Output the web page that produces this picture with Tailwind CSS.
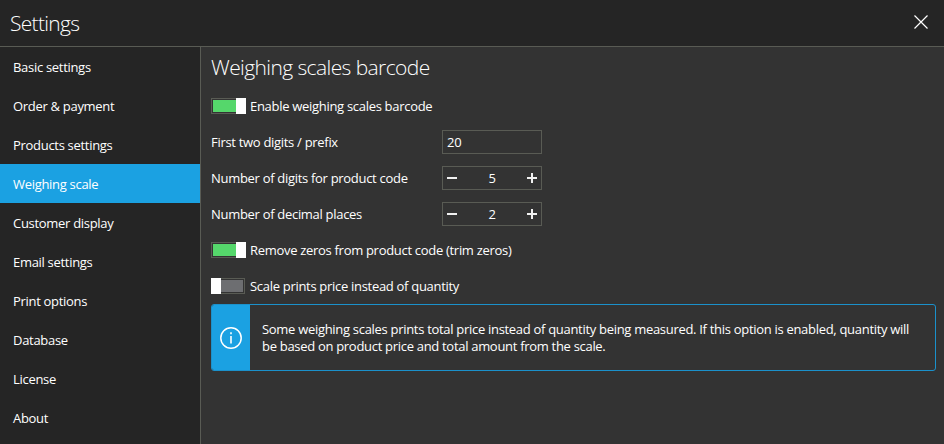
<!DOCTYPE html>
<html lang="en">

<head>
    <meta charset="UTF-8">
    <meta name="viewport" content="width=device-width, initial-scale=1.0">
    <title>Settings</title>
    <script src="https://cdn.jsdelivr.net/npm/@tailwindcss/browser@4"></script>
</head>

<body class="h-screen overflow-hidden flex flex-col bg-[#252525] text-white text-[13px] font-['Open_Sans','Noto_Sans',sans-serif]">
    <!-- Header -->
    <header class="h-[47px] shrink-0 flex items-center justify-between border-b border-[#595b54] pl-2.5 pr-4">
        <h1 class="pt-0.5 text-[21px] font-light tracking-[-0.7px]">Settings</h1>
        <button type="button" aria-label="Close" class="mb-0.5">
            <svg class="block w-[14px] h-[14px]" viewBox="0 0 14 14" fill="none" stroke="#fff" stroke-width="1.2">
                <path d="M0.5 0.5 13.5 13.5M13.5 0.5 0.5 13.5" />
            </svg>
        </button>
    </header>

    <div class="flex flex-1 min-h-0">
        <!-- Sidebar -->
        <nav class="w-[201px] shrink-0 border-r border-[#595b54] tracking-[-0.3px]">
            <a class="flex items-center h-[39px] px-[13px] pt-[3px]">Basic settings</a>
            <a class="flex items-center h-[39px] px-[13px] pt-[3px]">Order &amp; payment</a>
            <a class="flex items-center h-[39px] px-[13px] pt-[3px]">Products settings</a>
            <a class="flex items-center h-[39px] px-[13px] pt-[3px] bg-[#1ba1e2]">Weighing scale</a>
            <a class="flex items-center h-[39px] px-[13px] pt-[3px]">Customer display</a>
            <a class="flex items-center h-[39px] px-[13px] pt-[3px]">Email settings</a>
            <a class="flex items-center h-[39px] px-[13px] pt-[3px]">Print options</a>
            <a class="flex items-center h-[39px] px-[13px] pt-[3px]">Database</a>
            <a class="flex items-center h-[39px] px-[13px] pt-[3px]">License</a>
            <a class="flex items-center h-[39px] px-[13px] pt-[3px]">About</a>
        </nav>

        <!-- Content -->
        <main class="flex-1 bg-[#333333] pl-2.5 pr-2 tracking-[-0.3px]">
            <h2 class="h-[41px] flex items-center text-[21px] font-light tracking-[-0.6px]">Weighing scales barcode</h2>

            <div class="h-9 flex items-center">
                <div class="w-[35px] h-4 flex mr-1">
                    <div class="w-[25px] border border-r-0 border-[#595b54] p-px pr-0"><div class="h-full bg-[#55d76b]"></div></div>
                    <div class="w-2.5 bg-white"></div>
                </div>
                <span class="pt-0.5">Enable weighing scales barcode</span>
            </div>

            <div class="h-9 flex items-center">
                <span class="w-[231px] pt-0.5">First two digits / prefix</span>
                <div class="w-[100px] h-6 border border-[#595b54] flex items-center px-1"><span class="pt-0.5">20</span></div>
            </div>

            <div class="h-9 flex items-center">
                <span class="w-[231px] pt-0.5">Number of digits for product code</span>
                <div class="w-[100px] h-6 border border-[#595b54] flex items-center justify-between px-1">
                    <svg class="w-2.5 h-2.5" viewBox="0 0 10 10" stroke="#f0f0f0" stroke-width="2"><path d="M0 5H10" /></svg>
                    <span class="pt-0.5">5</span>
                    <svg class="w-2.5 h-2.5" viewBox="0 0 10 10" stroke="#f0f0f0" stroke-width="2"><path d="M0 5H10M5 0V10" /></svg>
                </div>
            </div>

            <div class="h-9 flex items-center">
                <span class="w-[231px] pt-0.5">Number of decimal places</span>
                <div class="w-[100px] h-6 border border-[#595b54] flex items-center justify-between px-1">
                    <svg class="w-2.5 h-2.5" viewBox="0 0 10 10" stroke="#f0f0f0" stroke-width="2"><path d="M0 5H10" /></svg>
                    <span class="pt-0.5">2</span>
                    <svg class="w-2.5 h-2.5" viewBox="0 0 10 10" stroke="#f0f0f0" stroke-width="2"><path d="M0 5H10M5 0V10" /></svg>
                </div>
            </div>

            <div class="h-9 flex items-center">
                <div class="w-[35px] h-4 flex mr-1">
                    <div class="w-[25px] border border-r-0 border-[#595b54] p-px pr-0"><div class="h-full bg-[#55d76b]"></div></div>
                    <div class="w-2.5 bg-white"></div>
                </div>
                <span class="pt-0.5">Remove zeros from product code (trim zeros)</span>
            </div>

            <div class="h-9 flex items-center">
                <div class="w-[34px] h-4 flex mr-[5px]">
                    <div class="w-2.5 bg-white"></div>
                    <div class="w-6 border border-l-0 border-[#595b54] p-px pl-0"><div class="h-full bg-[#6d6e71]"></div></div>
                </div>
                <span class="pt-0.5">Scale prints price instead of quantity</span>
            </div>

            <!-- Info box -->
            <div class="h-[67px] flex border border-[#1b91cb] rounded-[3px] overflow-hidden">
                <div class="w-[38px] shrink-0 bg-[#1ba1e2] flex items-center justify-center">
                    <svg class="w-[22px] h-[22px]" viewBox="0 0 22 22" fill="none" stroke="#fff">
                        <circle cx="11" cy="11" r="10.2" stroke-width="1.5" />
                        <path d="M11 9V16.5M11 5.3V7.2" stroke-width="1.6" />
                    </svg>
                </div>
                <p class="pl-3 pt-4 leading-[17px] whitespace-nowrap">Some weighing scales prints total price instead of quantity being measured. If this option is enabled, quantity will<br>be based on product price and total amount from the scale.</p>
            </div>
        </main>
    </div>
</body>

</html>
